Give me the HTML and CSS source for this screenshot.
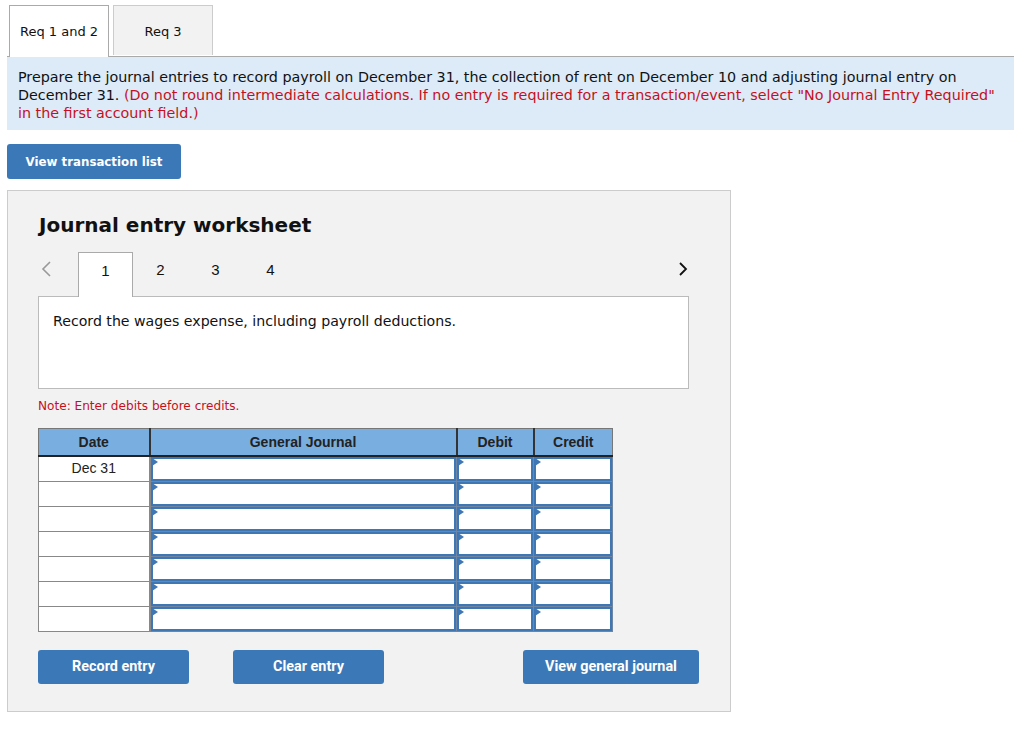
FILE: index.html
```html
<!DOCTYPE html>
<html lang="en">
<head>
    <meta charset="UTF-8">
    <title>Journal entry worksheet</title>
    <link rel="stylesheet" href="styles.css">
</head>
<body>
    <div class="page">
        <div class="tabs">
            <div class="tab active">Req 1 and 2</div>
            <div class="tab">Req 3</div>
        </div>
        <div class="instructions">
            Prepare the journal entries to record payroll on December 31, the collection of rent on December 10 and adjusting journal entry on December 31. <span class="red">(Do not round intermediate calculations. If no entry is required for a transaction/event, select "No Journal Entry Required" in the first account field.)</span>
        </div>
        <button class="btn btn-list">View transaction list</button>

        <div class="worksheet">
            <h2>Journal entry worksheet</h2>
            <div class="steps">
                <span class="arrow prev">
                    <svg width="12" height="18" viewBox="0 0 12 18"><polyline points="10,2 3,9 10,16" fill="none" stroke="#999" stroke-width="1.6"/></svg>
                </span>
                <div class="step current">1</div>
                <div class="step">2</div>
                <div class="step">3</div>
                <div class="step">4</div>
                <span class="arrow next">
                    <svg width="12" height="18" viewBox="0 0 12 18"><polyline points="3,3 9,9 3,15" fill="none" stroke="#111" stroke-width="1.8"/></svg>
                </span>
            </div>
            <div class="question">Record the wages expense, including payroll deductions.</div>
            <p class="note">Note: Enter debits before credits.</p>

            <table class="journal">
                <thead>
                    <tr>
                        <th class="c-date">Date</th>
                        <th class="c-acct">General Journal</th>
                        <th class="c-num">Debit</th>
                        <th class="c-num2">Credit</th>
                    </tr>
                </thead>
                <tbody id="rows"></tbody>
            </table>

            <div class="actions">
                <button class="btn btn-wide">Record entry</button>
                <button class="btn btn-wide">Clear entry</button>
                <button class="btn btn-journal">View general journal</button>
            </div>
        </div>
    </div>
    <script>
    var body = document.getElementById('rows');
    for (let i = 0; i < 7; i++) {
        const tr = document.createElement('tr');
        const date = document.createElement('td');
        date.className = 'date';
        date.textContent = i === 0 ? 'Dec 31' : '';
        tr.appendChild(date);
        for (let j = 0; j < 3; j++) {
            const td = document.createElement('td');
            td.className = 'entry';
            td.innerHTML = '<div class="field"></div>';
            tr.appendChild(td);
        }
        body.appendChild(tr);
    }
    </script>
</body>
</html>
```

FILE: styles.css
```css
* {
    margin: 0;
    padding: 0;
    box-sizing: border-box;
}
body {
    background: #fff;
    color: #111;
    font-family: "DejaVu Sans", Verdana, sans-serif;
}
.page {
    width: 1007px;
    margin-left: 7px;
    padding-top: 5px;
}
.tabs {
    display: flex;
    gap: 4px;
    padding-left: 2px;
    border-bottom: 1px solid #aaa;
}
.tab {
    width: 100px;
    height: 50px;
    border: 1px solid #ccc;
    border-bottom: none;
    background: #f2f2f2;
    font-size: 13px;
    line-height: 52px;
    text-align: center;
}
.tab.active {
    height: 52px;
    margin-bottom: -1px;
    background: #fff;
    border-color: #aaa;
}
.instructions {
    background: #dcebf7;
    padding: 11px 11px 8px;
    font-size: 14.3px;
    line-height: 18px;
}
.red {
    color: #c5111c;
}
.btn {
    border: none;
    border-radius: 3px;
    background: #3b78b7;
    color: #fff;
    font-family: Roboto, "Liberation Sans", sans-serif;
    font-weight: 700;
    font-size: 14.4px;
    cursor: pointer;
}
.btn-list {
    display: block;
    width: 174px;
    height: 35px;
    margin-top: 14px;
    font-family: "DejaVu Sans", Verdana, sans-serif;
    font-size: 11.8px;
}
.worksheet {
    width: 724px;
    margin-top: 11px;
    padding: 20px 30px 27px;
    background: #f2f2f2;
    border: 1px solid #ccc;
}
.worksheet h2 {
    font-size: 20px;
    line-height: 28px;
    font-weight: 700;
    margin-left: 1px;
}
.steps {
    display: flex;
    align-items: flex-end;
    width: 651px;
    height: 44px;
    margin-top: 13px;
    position: relative;
    z-index: 1;
}
.arrow {
    display: flex;
    align-items: center;
    height: 44px;
    padding-bottom: 10px;
}
.arrow.prev {
    width: 40px;
    padding-left: 2px;
}
.arrow.next {
    margin-left: auto;
}
.step {
    width: 55px;
    height: 44px;
    font-family: "Liberation Sans", Arial, sans-serif;
    font-size: 15px;
    line-height: 36px;
    text-align: center;
}
.step.current {
    height: 45px;
    margin-bottom: -1px;
    background: #fff;
    border: 1px solid #aaa;
    border-bottom: none;
}
.question {
    width: 651px;
    height: 93px;
    background: #fff;
    border: 1px solid #bbb;
    padding: 15px 14px;
    font-size: 14.15px;
    line-height: 18px;
}
.note {
    margin-top: 9px;
    color: #c5111c;
    font-size: 12.1px;
    line-height: 16px;
}
.journal {
    margin-top: 14px;
    border-collapse: collapse;
    border: 1px solid #777;
    font-family: "Liberation Sans", Arial, sans-serif;
    font-size: 14px;
    table-layout: fixed;
    width: 574px;
}
.journal th {
    height: 27px;
    background: #79aee0;
    color: #222;
    font-weight: 700;
    border-left: 2px solid #333;
    border-bottom: 2px solid #222;
}
.journal th:first-child {
    border-left: 1px solid #777;
}
.c-date { width: 111px; }
.c-acct { width: 307px; }
.c-num { width: 77px; }
.c-num2 { width: 79px; }
.journal td {
    height: 25px;
    padding: 0;
    background: #fff;
}
.journal td.date {
    border: 1px solid #888;
    border-right: 2px solid #888;
    text-align: center;
    color: #222;
    padding-bottom: 2px;
}
.journal td.entry {
    border: 1px solid #6e85a3;
}
.field {
    position: relative;
    height: 24px;
    border: 2px solid #3f76b4;
    background: #fff;
}
.field::before {
    content: "";
    position: absolute;
    left: -1px;
    top: -1px;
    border-top: 4px solid transparent;
    border-bottom: 4px solid transparent;
    border-left: 6px solid #3f76b4;
}
.actions {
    display: flex;
    gap: 44px;
    margin-top: 18px;
}
.btn-wide {
    width: 151px;
    height: 34px;
}
.btn-journal {
    width: 176px;
    height: 34px;
    margin-left: auto;
    margin-right: 1px;
}
```
